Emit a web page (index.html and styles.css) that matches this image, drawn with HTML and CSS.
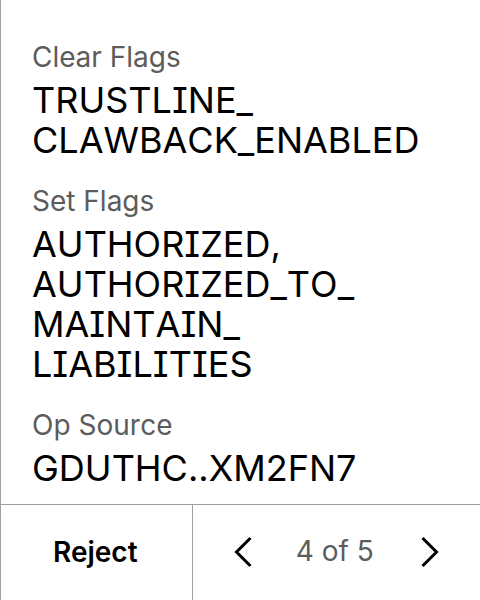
FILE: index.html
```html
<!DOCTYPE html>
<html lang="en">
<head>
<meta charset="utf-8">
<meta name="viewport" content="width=device-width, initial-scale=1">
<title>Review transaction</title>
<link rel="stylesheet" href="styles.css">
</head>
<body>
<main class="screen">
  <dl class="fields">
    <div class="field">
      <dt class="label">Clear Flags</dt>
      <dd class="value">TRUSTLINE_<br>CLAWBACK_ENABLED</dd>
    </div>
    <div class="field">
      <dt class="label">Set Flags</dt>
      <dd class="value">AUTHORIZED,<br>AUTHORIZED_TO_<br>MAINTAIN_<br>LIABILITIES</dd>
    </div>
    <div class="field">
      <dt class="label">Op Source</dt>
      <dd class="value">GDUTHC..XM2FN7</dd>
    </div>
  </dl>
  <footer class="footer">
    <button class="reject" type="button">Reject</button>
    <nav class="pager" aria-label="Pages">
      <button class="arrow" type="button" aria-label="Previous page">
        <svg class="icon" viewBox="0 0 32 32" aria-hidden="true"><path d="M26.5 3 12.5 17 26.5 31"/></svg>
      </button>
      <span class="count">4 of 5</span>
      <button class="arrow" type="button" aria-label="Next page">
        <svg class="icon" viewBox="0 0 32 32" aria-hidden="true"><path d="M8.5 3 22.5 17 8.5 31"/></svg>
      </button>
    </nav>
  </footer>
</main>
</body>
</html>
```

FILE: styles.css
```css
* {
  box-sizing: border-box;
}

body {
  margin: 0;
  background: #fff;
  color: #000;
  font-family: Inter, "Liberation Sans", sans-serif;
  font-kerning: none;
}

.screen {
  display: flex;
  flex-direction: column;
  min-height: 100vh;
  border-left: 1px solid #a0a0a0;
}

.fields {
  display: flex;
  flex: 1;
  flex-direction: column;
  justify-content: flex-end;
  gap: 24px;
  margin: 0;
  padding: 0 31px 16px;
}

.label {
  color: #5c5c5c;
  font-size: 28px;
  line-height: 34px;
  margin-bottom: 6px;
}

.value {
  margin: 0;
  font-size: 36px;
  font-weight: 400;
  font-feature-settings: "cv08" 1;
  line-height: 40px;
}

.footer {
  display: grid;
  grid-template-columns: 2fr 3fr;
  height: 96px;
  border-top: 1px solid #a0a0a0;
}

.reject,
.arrow {
  border: 0;
  padding: 0;
  background: none;
  color: inherit;
  font-family: inherit;
}

.reject {
  border-right: 1px solid #a0a0a0;
  padding: 0 2px 2px 0;
  font-size: 28px;
  font-weight: 600;
}

.pager {
  display: flex;
  align-items: center;
  justify-content: space-between;
  padding: 0 34px 3px 31px;
}

.arrow {
  display: flex;
}

.icon {
  width: 32px;
  height: 32px;
  overflow: visible;
  fill: none;
  stroke: currentColor;
  stroke-width: 3;
}

.count {
  color: #5c5c5c;
  font-size: 28px;
}
```
